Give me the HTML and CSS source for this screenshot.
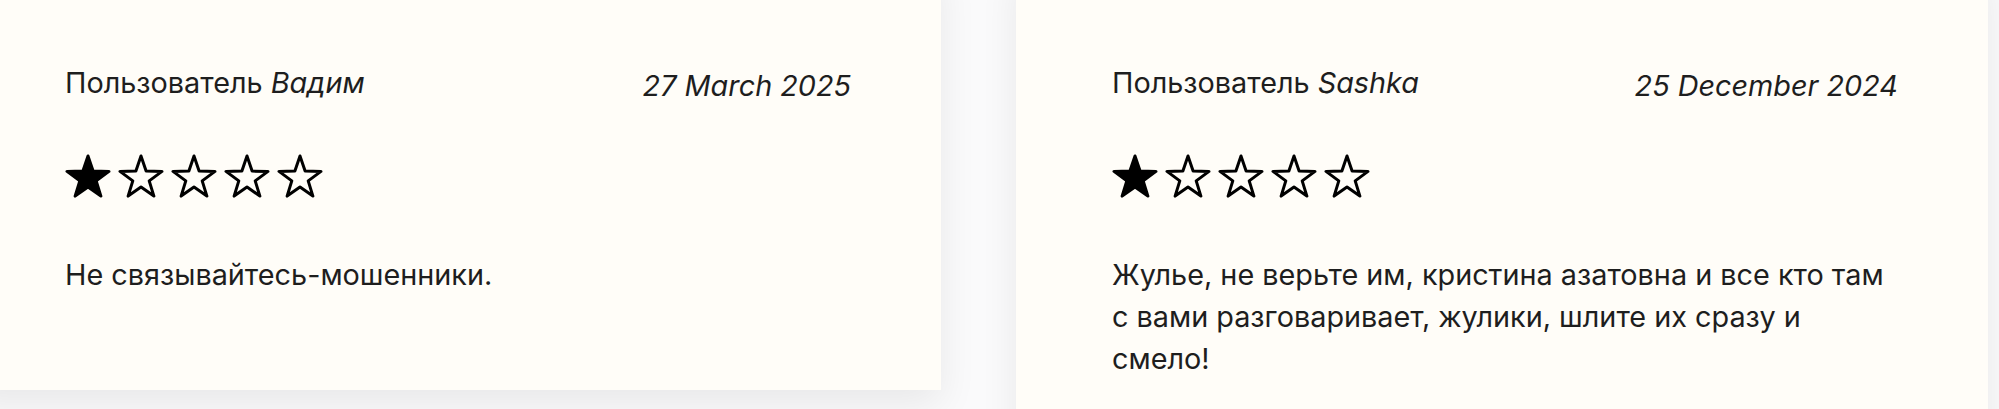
FILE: index.html
```html
<!DOCTYPE html>
<html lang="ru">
<head>
<meta charset="utf-8">
<title>Отзывы</title>
<link rel="stylesheet" href="styles.css">
</head>
<body>
<section class="reviews">
  <div class="track">
    <article class="review">
      <header class="review-head">
        <span class="author">Пользователь <em>Вадим</em></span>
        <time class="date">27 March 2025</time>
      </header>
      <div class="rating" aria-label="1 из 5">
        <svg class="star on" viewBox="0 0 46 44"><polygon points="23,2 28.1,17.1 44,17.4 31.2,26.9 35.9,42.1 23,33 10.1,42.1 14.8,26.9 2,17.4 17.9,17.1"/></svg>
        <svg class="star" viewBox="0 0 46 44"><polygon points="23,2 28.1,17.1 44,17.4 31.2,26.9 35.9,42.1 23,33 10.1,42.1 14.8,26.9 2,17.4 17.9,17.1"/></svg>
        <svg class="star" viewBox="0 0 46 44"><polygon points="23,2 28.1,17.1 44,17.4 31.2,26.9 35.9,42.1 23,33 10.1,42.1 14.8,26.9 2,17.4 17.9,17.1"/></svg>
        <svg class="star" viewBox="0 0 46 44"><polygon points="23,2 28.1,17.1 44,17.4 31.2,26.9 35.9,42.1 23,33 10.1,42.1 14.8,26.9 2,17.4 17.9,17.1"/></svg>
        <svg class="star" viewBox="0 0 46 44"><polygon points="23,2 28.1,17.1 44,17.4 31.2,26.9 35.9,42.1 23,33 10.1,42.1 14.8,26.9 2,17.4 17.9,17.1"/></svg>
      </div>
      <p class="text">Не связывайтесь-мошенники.</p>
    </article>
    <article class="review">
      <header class="review-head">
        <span class="author">Пользователь <em>Sashka</em></span>
        <time class="date">25 December 2024</time>
      </header>
      <div class="rating" aria-label="1 из 5">
        <svg class="star on" viewBox="0 0 46 44"><polygon points="23,2 28.1,17.1 44,17.4 31.2,26.9 35.9,42.1 23,33 10.1,42.1 14.8,26.9 2,17.4 17.9,17.1"/></svg>
        <svg class="star" viewBox="0 0 46 44"><polygon points="23,2 28.1,17.1 44,17.4 31.2,26.9 35.9,42.1 23,33 10.1,42.1 14.8,26.9 2,17.4 17.9,17.1"/></svg>
        <svg class="star" viewBox="0 0 46 44"><polygon points="23,2 28.1,17.1 44,17.4 31.2,26.9 35.9,42.1 23,33 10.1,42.1 14.8,26.9 2,17.4 17.9,17.1"/></svg>
        <svg class="star" viewBox="0 0 46 44"><polygon points="23,2 28.1,17.1 44,17.4 31.2,26.9 35.9,42.1 23,33 10.1,42.1 14.8,26.9 2,17.4 17.9,17.1"/></svg>
        <svg class="star" viewBox="0 0 46 44"><polygon points="23,2 28.1,17.1 44,17.4 31.2,26.9 35.9,42.1 23,33 10.1,42.1 14.8,26.9 2,17.4 17.9,17.1"/></svg>
      </div>
      <p class="text">Жулье, не верьте им, кристина азатовна и все кто там с вами разговаривает, жулики, шлите их сразу и смело!</p>
    </article>
  </div>
</section>
</body>
</html>
```
FILE: styles.css
```css
html, body {
  margin: 0;
  padding: 0;
}

body {
  background: #fafafb;
  font-family: Inter, "Noto Sans", sans-serif;
  color: #1e1e1e;
  overflow: hidden;
}

.reviews {
  height: 409px;
  overflow: hidden;
}

/* carousel strip: the first card is partly scrolled out to the left */
.track {
  display: flex;
  align-items: flex-start;
  gap: 75px;
  margin: -34px 0 0 -31px;
}

.review {
  flex: 0 0 972px;
  box-sizing: border-box;
  padding: 96px 90px 94px 96px;
  background: #fffdf8;
  box-shadow: 0 14px 36px rgba(0, 0, 0, 0.075);
  font-size: 28.8px;
  line-height: 42px;
}

.review-head {
  display: flex;
  justify-content: space-between;
  align-items: flex-start;
}

.author em,
.date {
  font-style: italic;
}

.date {
  padding-top: 3px;
}

.rating {
  display: flex;
  gap: 7px;
  margin-top: 47px;
}

.star {
  width: 46px;
  height: 44px;
  display: block;
}

.star polygon {
  fill: none;
  stroke: #000;
  stroke-width: 3;
  stroke-linejoin: round;
}

.star.on polygon {
  fill: #000;
}

.text {
  margin: 56px 0 0;
}
```
